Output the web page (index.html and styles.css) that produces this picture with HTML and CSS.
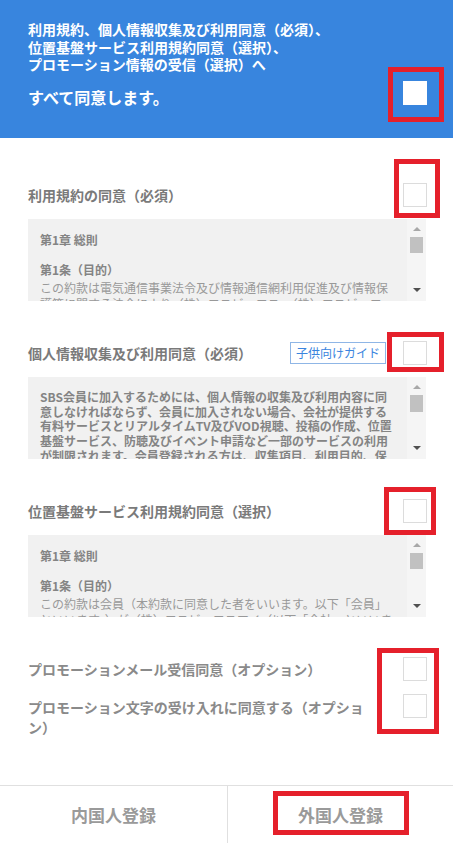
FILE: index.html
```html
<!DOCTYPE html>
<html lang="ja">
<head>
<meta charset="UTF-8" />
<meta name="viewport" content="width=device-width, initial-scale=1" />
<title>利用規約の同意</title>
<link rel="stylesheet" href="styles.css">
</head>
<body>

<!-- Agree all -->
<div class="agree-all">
  <p class="agree-all-desc">利用規約、個人情報収集及び利用同意（必須）、<br>位置基盤サービス利用規約同意（選択）、<br>プロモーション情報の受信（選択）へ</p>
  <div class="agree-all-row">
    <strong>すべて同意します。</strong>
    <span class="check check-white mark mark-all"></span>
  </div>
</div>

<div class="terms">

  <section class="term">
    <div class="term-head">
      <h2>利用規約の同意（必須）</h2>
      <span class="check mark mark-1"></span>
    </div>
    <div class="term-box">
      <div class="term-text">
        <p class="b">第1章 総則</p>
        <p class="b gap">第1条（目的）</p>
        <p class="body">この約款は電気通信事業法令及び情報通信網利用促進及び情報保護等に関する法令により（株）エスビーエス、（株）エスビーエスアイ（以下「会社」といいます）が提供するサービスの利用条件及び手続きを定めることを目的とします。</p>
      </div>
      <div class="scrollbar"><i class="arrow-up"></i><i class="thumb"></i><i class="arrow-down"></i></div>
    </div>
  </section>

  <section class="term">
    <div class="term-head">
      <h2>個人情報収集及び利用同意（必須）</h2>
      <a href="#" class="guide-btn">子供向けガイド</a>
      <span class="check mark mark-2"></span>
    </div>
    <div class="term-box">
      <div class="term-text">
        <p class="b dense">SBS会員に加入するためには、個人情報の収集及び利用内容に同<br>意しなければならず、会員に加入されない場合、会社が提供する<br>有料サービスとリアルタイムTV及びVOD視聴、投稿の作成、位置<br>基盤サービス、防聴及びイベント申請など一部のサービスの利用<br>が制限されます。会員登録される方は、収集項目、利用目的、保</p>
      </div>
      <div class="scrollbar"><i class="arrow-up"></i><i class="thumb thumb-2"></i><i class="arrow-down"></i></div>
    </div>
  </section>

  <section class="term">
    <div class="term-head">
      <h2>位置基盤サービス利用規約同意（選択）</h2>
      <span class="check mark mark-3"></span>
    </div>
    <div class="term-box">
      <div class="term-text">
        <p class="b">第1章 総則</p>
        <p class="b gap">第1条（目的）</p>
        <p class="body">この約款は会員（本約款に同意した者をいいます。以下「会員」といいます。）が（株）エスビーエスアイ（以下「会社」といいます）が提供する位置基盤サービスを利用することに関する事項を定めます。</p>
      </div>
      <div class="scrollbar"><i class="arrow-up"></i><i class="thumb"></i><i class="arrow-down"></i></div>
    </div>
  </section>

  <div class="promo mark-promo">
    <div class="promo-row">
      <span class="promo-label">プロモーションメール受信同意（オプション）</span>
      <span class="check"></span>
    </div>
    <div class="promo-row top">
      <span class="promo-label two">プロモーション文字の受け入れに同意する（オプション）</span>
      <span class="check"></span>
    </div>
  </div>

</div>

<div class="foot">
  <a href="#" class="foot-btn">内国人登録</a>
  <a href="#" class="foot-btn mark-foot">外国人登録</a>
</div>

</body>
</html>
```

FILE: styles.css
```css
body {
  margin: 0;
  background: #fff;
  font-family: "Noto Sans CJK JP", "Liberation Sans", sans-serif;
  color: #777;
}

p {
  margin: 0;
}

/* Agree all */
.agree-all {
  height: 138px;
  box-sizing: border-box;
  padding: 21px 26px 0 28px;
  background: #3885de;
  color: #fff;
}

.agree-all-desc {
  font-size: 14px;
  font-weight: bold;
  line-height: 17.5px;
}

.agree-all-row {
  display: flex;
  justify-content: space-between;
  align-items: flex-start;
  margin-top: 7px;
}

.agree-all-row strong {
  margin-top: 6px;
  font-size: 16px;
  line-height: 20px;
}

/* Checkbox */
.check {
  display: block;
  flex: none;
  width: 24px;
  height: 24px;
  box-sizing: border-box;
  border: 1px solid #dcdcdc;
  background: #fff;
}

.check-white {
  border-color: #fff;
}

/* Red frames */
.mark,
.mark-promo,
.mark-foot {
  position: relative;
}

.mark::after,
.mark-promo::after,
.mark-foot::after {
  content: "";
  position: absolute;
  border: 5px solid #e5202b;
}

.mark-all::after { left: -16px; right: -18px; top: -15px; bottom: -18px; }
.mark-1::after { left: -10px; right: -14px; top: -25px; bottom: -12px; }
.mark-2::after { left: -17px; right: -18px; top: -10px; bottom: -8px; }
.mark-3::after { left: -20px; right: -10px; top: -13px; bottom: -13px; }
.mark-promo::after { right: -12px; width: 62px; top: -9px; bottom: 3px; box-sizing: border-box; }
.mark-foot::after { left: 45px; right: 44px; top: 5px; bottom: 8px; }

/* Terms */
.terms {
  padding: 45px 26px 0 28px;
}

.term {
  margin-bottom: 40px;
}

.term-head {
  display: flex;
  align-items: center;
  height: 24px;
}

.term-head h2 {
  flex: 1;
  margin: 0;
  font-size: 14px;
  font-weight: bold;
  color: #7a7a7a;
}

.guide-btn {
  margin-right: 17px;
  padding: 0 5px;
  height: 22px;
  line-height: 20px;
  box-sizing: border-box;
  border: 1px solid #8fb6e6;
  font-size: 12px;
  color: #3a84de;
  text-decoration: none;
}

.term-box {
  display: flex;
  height: 82px;
  margin-top: 12px;
  margin-right: 1px;
  background: #f1f1f1;
  overflow: hidden;
}

.term-text {
  flex: 1;
  min-width: 0;
  padding: 13px 14px 0 12px;
  font-size: 12px;
  color: #999;
  overflow: hidden;
}

.term-text .b {
  font-weight: bold;
  line-height: 15px;
  color: #848484;
}

.term-text .gap {
  margin-top: 15px;
}

.term-text .dense {
  line-height: 14.7px;
  white-space: nowrap;
}

.term-text .body {
  margin-top: 3px;
  line-height: 16px;
}

/* Fake scrollbar */
.scrollbar {
  display: flex;
  flex: none;
  flex-direction: column;
  align-items: center;
  width: 19px;
  background: #f5f5f5;
}

.scrollbar i {
  display: block;
}

.arrow-up {
  margin-top: 8px;
  border: 4px solid transparent;
  border-top: 0;
  border-bottom: 4px solid #a8a8a8;
}

.thumb {
  width: 13px;
  height: 16px;
  margin-top: 6px;
  background: #c1c1c1;
}

.thumb-2 {
  height: 17px;
}

.arrow-down {
  margin-top: auto;
  margin-bottom: 9px;
  border: 4px solid transparent;
  border-bottom: 0;
  border-top: 4px solid #505050;
}

/* Promotions */
.promo-row {
  display: flex;
  align-items: center;
  justify-content: space-between;
}

.promo-row.top {
  align-items: flex-start;
  margin-top: 13px;
}

.promo-label {
  width: 342px;
  font-size: 14px;
  font-weight: bold;
  line-height: 20px;
  color: #8a8a8a;
}

.promo-label.two {
  padding-top: 3px;
}

/* Footer buttons */
.foot {
  display: grid;
  grid-template-columns: 227px 1fr;
  height: 57px;
  margin-top: 48px;
  border-top: 1px solid #e0e0e0;
}

.foot-btn {
  display: flex;
  align-items: center;
  justify-content: center;
  font-size: 17px;
  font-weight: bold;
  color: #9a9a9a;
  text-decoration: none;
}

.foot-btn + .foot-btn {
  border-left: 1px solid #e0e0e0;
}
```
